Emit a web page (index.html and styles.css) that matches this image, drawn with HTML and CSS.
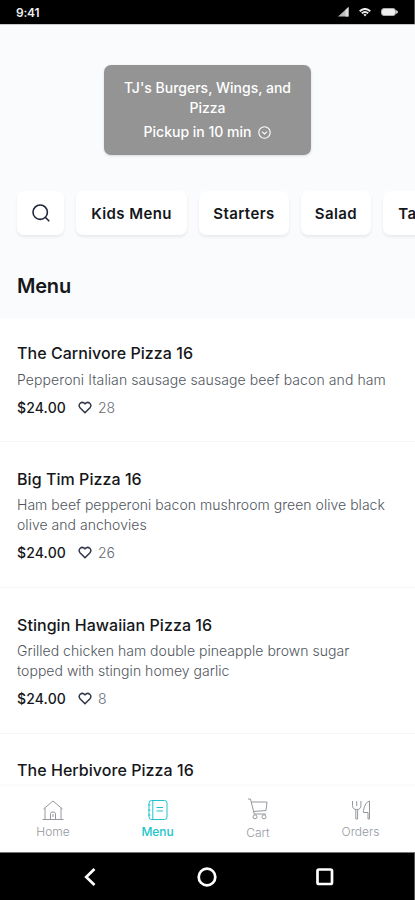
FILE: index.html
```html
<!DOCTYPE html>
<html lang="en">
<head>
<meta charset="utf-8">
<meta name="viewport" content="width=device-width, initial-scale=1">
<title>Menu</title>
<link rel="stylesheet" href="styles.css">
</head>
<body>
<div class="phone">
  <header class="status">
    <span class="time">9:41</span>
    <span class="signals">
      <svg width="11" height="10" viewBox="0 0 11 10"><path d="M0 9.500 10.500 0v9.500z" fill="#bbb"/><path d="M7.500 3v6.500h3V0z" fill="#ddd"/></svg>
      <svg width="12" height="9" viewBox="0 0 12 9" fill="none" stroke="#eee" stroke-width="1.900"><path d="M.7 3.200Q6-1.300 11.300 3.200M2.800 5.300Q6 2.700 9.200 5.300"/><path d="M4.300 6.500 6 8.600l1.700-2.100Q6 5.300 4.300 6.500z" fill="#eee" stroke="none"/></svg>
      <svg width="17" height="8" viewBox="0 0 17 8"><rect x=".5" y=".5" width="14" height="7" rx="2.500" fill="#eee" stroke="#aaa"/><path d="M15 2.200q2 .3 2 1.800t-2 1.800z" fill="#ccc"/></svg>
    </span>
  </header>
  <main class="content">
    <section class="top">
      <div class="store">
        <div class="store-name">TJ's Burgers, Wings, and<br>Pizza</div>
        <div class="pickup"><span>Pickup in 10 min</span>
          <svg width="13" height="13" viewBox="0 0 13 13" fill="none" stroke="#fff" stroke-width="1.100"><circle cx="6.500" cy="6.500" r="5.700"/><path d="m4 5.700 2.500 2.200L9 5.700"/></svg>
        </div>
      </div>
      <div class="chips">
        <div class="chip search"><svg width="20" height="20" viewBox="0 0 20 20" fill="none" stroke="#20243c" stroke-width="1.600" stroke-linecap="round"><circle cx="9.200" cy="9.200" r="7.200"/><path d="m14.500 14.500 3.300 3.300"/></svg></div>
        <div class="chip kids">Kids Menu</div>
        <div class="chip starters">Starters</div>
        <div class="chip salad">Salad</div>
        <div class="chip tacos">Tacos</div>
      </div>
      <h1>Menu</h1>
    </section>
    <section class="list">
      <article class="item first">
        <h2>The Carnivore Pizza 16</h2>
        <p class="spaced">Pepperoni Italian sausage sausage beef bacon and ham</p>
        <div class="meta"><b>$24.00</b><svg width="14" height="13" viewBox="0 0 14 13"><path d="M7 11.800 2 6.700C-.8 3.600 3.700-.7 7 2.800c3.300-3.500 7.800.8 5 3.900z"/></svg><span>28</span></div>
      </article>
      <article class="item tall">
        <h2>Big Tim Pizza 16</h2>
        <p>Ham beef pepperoni bacon mushroom green olive black<br>olive and anchovies</p>
        <div class="meta"><b>$24.00</b><svg width="14" height="13" viewBox="0 0 14 13"><path d="M7 11.800 2 6.700C-.8 3.600 3.700-.7 7 2.800c3.300-3.500 7.800.8 5 3.900z"/></svg><span>26</span></div>
      </article>
      <article class="item tall">
        <h2>Stingin Hawaiian Pizza 16</h2>
        <p>Grilled chicken ham double pineapple brown sugar<br>topped with stingin homey garlic</p>
        <div class="meta"><b>$24.00</b><svg width="14" height="13" viewBox="0 0 14 13"><path d="M7 11.800 2 6.700C-.8 3.600 3.700-.7 7 2.800c3.300-3.500 7.800.8 5 3.900z"/></svg><span>8</span></div>
      </article>
      <article class="item last">
        <h2>The Herbivore Pizza 16</h2>
      </article>
    </section>
  </main>
  <nav class="tabs">
    <a class="tab home">
      <svg width="22" height="22" viewBox="0 0 22 22"><path d="M.5 20.500h21M3 20.500V8.800M19 20.500V8.800M1.500 10 11 2l9.500 8M8.500 20.500v-6q0-1.500 2.500-1.500t2.500 1.500v6M11 15v3"/></svg>
      <span>Home</span>
    </a>
    <a class="tab active">
      <svg width="22" height="22" viewBox="0 0 22 22"><rect x="2" y="1.500" width="18" height="19" rx="2.500"/><path d="M5.800 1.500v19M1 6h2.500M1 11h2.500M1 16h2.500M9.500 8.500H16M9.500 12H16"/></svg>
      <span>Menu</span>
    </a>
    <a class="tab cart">
      <svg width="22" height="22" viewBox="0 0 22 22"><path d="M1 1h2.500l3.700 15H19M4.200 4H20l-1 8.500L6.500 13.500"/><circle cx="8" cy="18.800" r="2"/><circle cx="17" cy="18.800" r="2"/></svg>
      <span>Cart</span>
    </a>
    <a class="tab orders">
      <svg width="22" height="22" viewBox="0 0 22 22"><path d="M2.500 2v4.500q0 4 4.200 4t4.200-4V2M6.700 2v5M5.800 10.500v9.500h1.800v-9.500M18 13.500v6.500h1.500V2Q15 3 13.500 11.500v2H18"/></svg>
      <span>Orders</span>
    </a>
  </nav>
  <footer class="system">
    <svg width="14" height="20" viewBox="0 0 14 20"><path d="M11.500 2 3.200 10l8.300 8"/></svg>
    <svg width="22" height="22" viewBox="0 0 22 22"><circle cx="11" cy="11" r="8.300"/></svg>
    <svg width="20" height="20" viewBox="0 0 20 20"><rect x="2.500" y="2.500" width="14.500" height="14.500" rx="1.500"/></svg>
  </footer>
</div>
</body>
</html>
```
FILE: styles.css
```css
* { box-sizing: border-box; }
body { margin: 0; font-family: Inter, "Liberation Sans", sans-serif; color: #15171a; background: #fff; }
.phone { width: 415px; height: 900px; display: flex; flex-direction: column; overflow: hidden; }
.status { flex: none; height: 24px; background: #000; color: #eee; display: flex; align-items: center; justify-content: space-between; padding: 0 16px; border-right: 1px solid #555; }
.time { font-size: 12px; font-weight: 600; letter-spacing: -.2px; }
.signals { display: flex; align-items: center; gap: 10px; }
.content { flex: 1; min-height: 0; overflow: hidden; }
.top { height: 294px; background: #fafbfd; border-top: 1px solid #c8c8c8; padding-top: 40px; overflow: hidden; }
.store { width: 207px; height: 90px; margin: 0 auto; border-radius: 7px; background: #949494; box-shadow: 0 1px 3px #0002; color: #fff; text-align: center; padding-top: 13px; font-size: 14px; font-weight: 500; line-height: 20px; }
.pickup { display: flex; justify-content: center; align-items: center; gap: 7px; margin-top: 4px; }
.chips { display: flex; gap: 12px; padding-left: 17px; margin-top: 36px; }
.chip { flex: none; height: 44px; border-radius: 7px; background: #fff; box-shadow: 0 2px 3px #00000012; display: flex; align-items: center; justify-content: center; font-size: 15px; font-weight: 600; letter-spacing: .4px; }
.search { width: 47px; }
.kids { width: 111px; }
.starters { width: 90px; }
.salad { width: 70px; }
.tacos { width: 76px; }
h1 { margin: 38px 0 0 17px; font-size: 20px; line-height: 26px; font-weight: 600; letter-spacing: -.2px; }
.item { height: 146px; padding: 26px 17px 0; border-bottom: 1px solid #f5f5f6; }
.first { height: 124px; padding-top: 24px; }
.last { padding-top: 25px; }
h2 { margin: 0; font-size: 16px; line-height: 22px; font-weight: 500; letter-spacing: .05px; }
p { margin: 5px 0 0; font-size: 14px; line-height: 20px; font-weight: 300; color: #50565e; letter-spacing: .03px; white-space: nowrap; }
.spaced { margin-top: 6px; letter-spacing: .09px; }
.meta { display: flex; align-items: center; margin-top: 7px; height: 20px; font-size: 14px; }
.meta b { font-weight: 500; width: 61px; letter-spacing: .15px; }
.meta svg { fill: none; stroke: #303548; stroke-width: 1.500; }
.meta span { font-weight: 300; color: #666b72; margin-left: 6px; }
.tabs { flex: none; height: 66px; background: #fff; box-shadow: 0 -1px 3px #00000008; display: flex; padding-left: 1px; position: relative; }
.tab { width: 105px; flex: none; display: flex; flex-direction: column; align-items: center; padding-top: 13px; color: #94989e; font-size: 12px; font-weight: 300; line-height: 15px; }
.tab svg { fill: none; stroke: currentColor; stroke-width: 1; }
.tab span { margin-top: 3px; }
.home { width: 104px; }
.cart { width: 96px; padding-top: 12px; }
.cart span { margin-top: 5px; }
.orders { width: 109px; }
.active { color: #20c4cc; }
.active span { font-weight: 500; letter-spacing: -.1px; }
.system { flex: none; height: 48px; background: #000; border-top: 1px solid #777; border-right: 1px solid #555; display: flex; align-items: center; justify-content: space-between; padding: 0 79px 0 83px; }
.system svg:nth-child(2) { margin-left: 2px; }
.system svg { fill: none; stroke: #fff; stroke-width: 2.700; }
```
